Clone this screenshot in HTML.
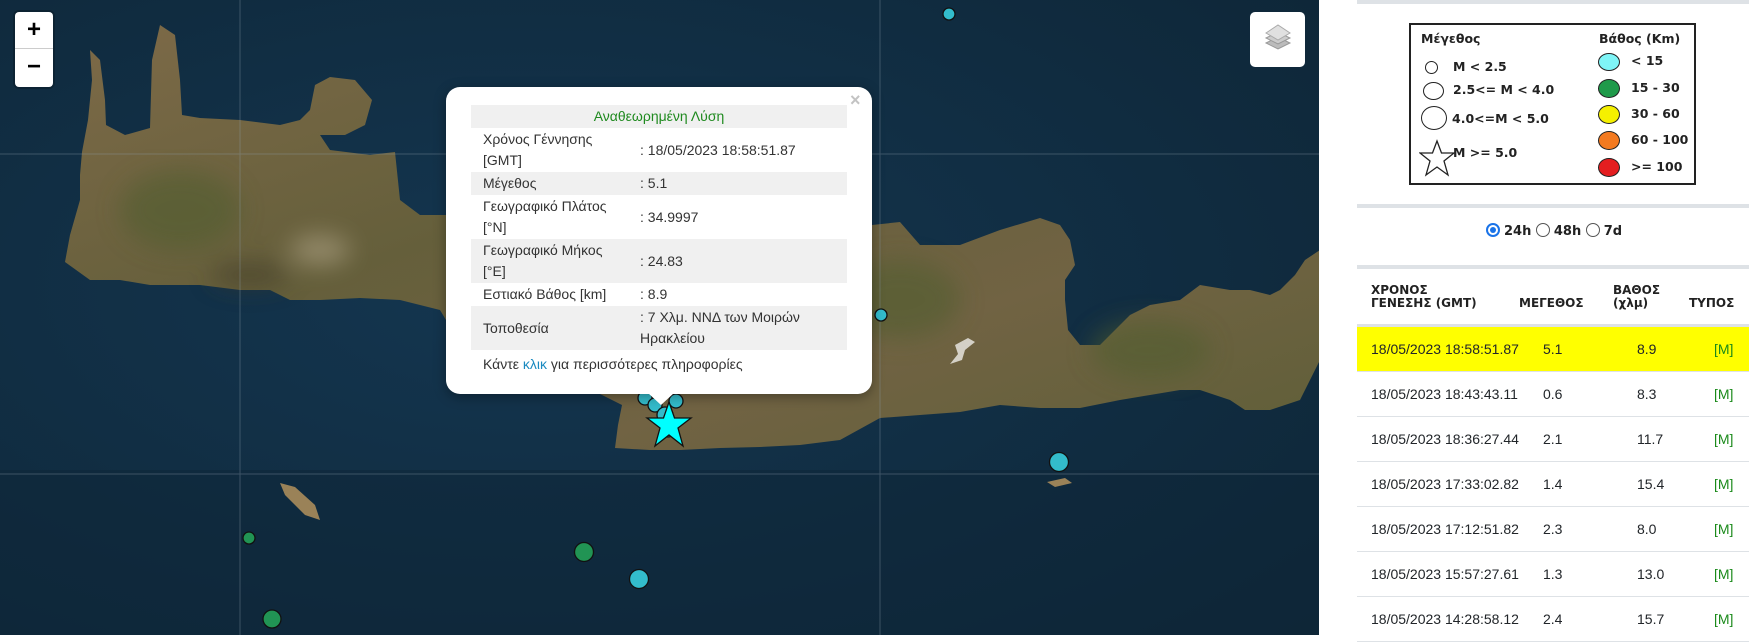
<!DOCTYPE html>
<html><head><meta charset="utf-8"><style>
*{margin:0;padding:0;box-sizing:border-box}
body{width:1749px;height:635px;overflow:hidden;background:#fff;font-family:"Liberation Sans","DejaVu Sans",sans-serif;position:relative}
#map{position:absolute;left:0;top:0;width:1319px;height:635px;overflow:hidden;background:#10293d}
.zoom{position:absolute;left:15px;top:12px;width:38px;height:75px;background:#fff;border-radius:4px;box-shadow:0 0 0 2px rgba(0,0,0,.2)}
.zoom div{height:37px;text-align:center;font:bold 24px/36px "Liberation Sans",sans-serif;color:#000}
.zoom div:first-child{border-bottom:1px solid #ccc}
.layers{position:absolute;left:1250px;top:12px;width:55px;height:55px;background:#fff;border-radius:5px}
.popup{position:absolute;left:446px;top:87px;width:426px;height:307px;background:#fff;border-radius:14px;box-shadow:0 3px 12px rgba(0,0,0,.35)}
.tip{position:absolute;left:648px;top:393px;width:0;height:0;border-left:13px solid transparent;border-right:13px solid transparent;border-top:12px solid #fff}
.close{position:absolute;left:850px;top:90px;color:#c3c3c3;font:bold 18px "Liberation Sans",sans-serif}
.ptab{position:absolute;left:471px;top:105px;width:376px;border-collapse:collapse;font-size:14px;color:#333;line-height:21px}
.ptab td{padding:1px 0 1px 12px;vertical-align:middle}
.ptab tr.g{background:#f0f0f0}
.ptab td.v{width:207px;padding-left:0}
.foot{position:absolute;left:483px;top:356px;font-size:14px;color:#333}
#side{position:absolute;left:1319px;top:0;width:430px;height:635px}
.hr{position:absolute;left:38px;width:392px;height:4px;background:#dee2e6}
.legend{position:absolute;left:90px;top:23px;width:287px;height:162px;border:2px solid #222;font-family:"DejaVu Sans",sans-serif;font-size:12.5px;font-weight:bold;color:#222}
.legend span{position:absolute;white-space:nowrap}
.c{position:absolute;border:1.5px solid #222;border-radius:50%}
.radios{position:absolute;top:223px;left:167px;font:bold 13px "DejaVu Sans",sans-serif;color:#222}
.rb{display:inline-block;width:14px;height:14px;border:1px solid #555;border-radius:50%;vertical-align:-2px;margin-right:4px;position:relative}
.rb.on{border:2px solid #1a73e8}
.rb.on:after{content:"";position:absolute;left:2px;top:2px;width:6px;height:6px;border-radius:50%;background:#1a73e8}
.th{position:absolute;font:bold 12px/13px "DejaVu Sans",sans-serif;color:#222}
.row{position:absolute;left:38px;width:392px;height:45px;border-bottom:1px solid #dee2e6;font-size:14px;color:#212529}
.row span{position:absolute;top:14px}
.row .m{color:#1a8a1a}
</style></head><body>
<div id="map">
<svg width="1319" height="635" style="position:absolute;left:0;top:0">
<defs>
<linearGradient id="land" x1="0" y1="0" x2="1" y2="1">
<stop offset="0" stop-color="#7d6a48"/><stop offset=".4" stop-color="#655f3b"/><stop offset=".7" stop-color="#716343"/><stop offset="1" stop-color="#5f5f38"/></linearGradient>
<radialGradient id="sea" cx=".4" cy=".45" r=".8"><stop offset="0" stop-color="#143650"/><stop offset="1" stop-color="#0e2637"/></radialGradient>
<filter id="bl"><feGaussianBlur stdDeviation="12"/></filter>
</defs>
<rect width="1319" height="635" fill="url(#sea)"/>
<rect x="0" y="470" width="1319" height="165" fill="#0e2638" opacity=".5"/>
<path fill="url(#land)" d="M82,152 L88,120 L92,80 L90,50 L100,60 L105,100 L106,125 L125,135 L150,128 L152,60 L160,25 L175,35 L180,80 L182,115 L200,118 L240,120 L280,125 L300,120 L310,110 L315,85 L330,77 L355,80 L372,100 L365,125 L345,135 L320,135 L330,150 L370,155 L395,152 L400,200 L420,215 L446,215 L600,220 L872,225 L900,222 L920,245 L960,245 L1000,230 L1040,218 L1060,225 L1070,240 L1075,265 L1065,280 L1065,300 L1068,330 L1080,345 L1100,345 L1115,330 L1130,315 L1150,305 L1180,300 L1200,285 L1230,290 L1250,290 L1270,295 L1280,290 L1295,275 L1305,260 L1320,250 L1320,360 L1300,400 L1270,410 L1245,410 L1230,400 L1200,390 L1180,390 L1150,395 L1120,400 L1080,408 L1040,408 L1000,405 L960,412 L920,415 L880,418 L840,440 L800,445 L760,447 L720,448 L680,450 L650,450 L615,448 L618,425 L622,405 L600,394 L446,320 L440,310 L400,300 L360,298 L320,300 L290,300 L270,290 L240,290 L200,285 L150,285 L120,280 L90,280 L65,262 L70,235 L80,200 L80,175 Z"/>
<g filter="url(#bl)" opacity=".55">
<ellipse cx="180" cy="210" rx="60" ry="40" fill="#4f5d2e"/>
<ellipse cx="900" cy="300" rx="60" ry="40" fill="#4f5d2e"/>
<ellipse cx="1150" cy="350" rx="60" ry="30" fill="#4f5d2e"/>
<ellipse cx="320" cy="250" rx="30" ry="15" fill="#b7ab8e"/>
<ellipse cx="250" cy="275" rx="40" ry="12" fill="#3d3826"/>
</g>
<path fill="#e6e4de" opacity=".85" d="M955,345 L968,338 L975,342 L965,350 L962,360 L950,364 L958,354 Z"/>
<path fill="#9a8258" d="M280,483 L295,487 L315,505 L320,520 L305,515 L285,495 Z"/>
<path fill="#9a8258" d="M1047,482 L1065,478 L1072,483 L1055,487 Z"/>
<g stroke="#8fa0ad" stroke-width="1" opacity=".35">
<line x1="240" y1="0" x2="240" y2="635"/><line x1="880" y1="0" x2="880" y2="635"/>
<line x1="0" y1="154" x2="1319" y2="154"/><line x1="0" y1="474" x2="1319" y2="474"/>
</g>
<g stroke="#111" stroke-width="1.3">
<circle cx="249" cy="538" r="6" fill="#219454"/>
<circle cx="272" cy="619" r="9" fill="#219454"/>
<circle cx="584" cy="552" r="9.5" fill="#219454"/>
<circle cx="639" cy="579" r="9.5" fill="#33bccb"/>
<circle cx="1059" cy="462" r="9.5" fill="#33bccb"/>
<circle cx="949" cy="14" r="6" fill="#33bccb"/>
<circle cx="881" cy="315" r="6" fill="#33bccb"/>
<circle cx="645" cy="398" r="7" fill="#33bccb"/>
<circle cx="655" cy="405" r="7" fill="#33bccb"/>
<circle cx="676" cy="401" r="7" fill="#33bccb"/>
<circle cx="665" cy="415" r="8" fill="#33bccb"/>
<circle cx="668" cy="430" r="7" fill="#33bccb"/>
<path d="M669,402 L674.5,418 L691,418 L678,428 L683,446 L669,435 L655,446 L660,428 L647,418 L663.5,418 Z" fill="#00ffff"/>
</g>
</svg>
<div class="zoom"><div>+</div><div>−</div></div>
<div class="layers"><svg width="55" height="55"><path d="M16,31 L28,25 L40,31 L28,37 Z" fill="#bbb" stroke="#999"/><path d="M16,26 L28,20 L40,26 L28,32 Z" fill="#ccc" stroke="#999"/><path d="M16,21 L28,13 L40,21 L28,28 Z" fill="#e0e0e0" stroke="#aaa"/></svg></div>
<div class="popup"></div>
<div class="tip"></div>
<div class="close">×</div>
<table class="ptab">
<tr class="g"><td colspan="2" style="text-align:center;color:#1f8a1f;padding:1px 0">Αναθεωρημένη Λύση</td></tr>
<tr><td>Χρόνος Γέννησης<br>[GMT]</td><td class="v">: 18/05/2023 18:58:51.87</td></tr>
<tr class="g"><td>Μέγεθος</td><td class="v">: 5.1</td></tr>
<tr><td>Γεωγραφικό Πλάτος<br>[°N]</td><td class="v">: 34.9997</td></tr>
<tr class="g"><td>Γεωγραφικό Μήκος<br>[°E]</td><td class="v">: 24.83</td></tr>
<tr><td>Εστιακό Βάθος [km]</td><td class="v">: 8.9</td></tr>
<tr class="g"><td>Τοποθεσία</td><td class="v">: 7 Χλμ. ΝΝΔ των Μοιρών<br>Ηρακλείου</td></tr>
</table>
<div class="foot">Κάντε <span style="color:#1a8ac0">κλικ</span> για περισσότερες πληροφορίες</div>
</div>
<div id="side">
<div class="hr" style="top:0"></div>
<div class="legend">
<span style="left:10px;top:6px">Μέγεθος</span>
<span style="left:188px;top:6px">Βάθος (Km)</span>
<div class="c" style="left:14px;top:36px;width:13px;height:13px"></div><span style="left:42px;top:34px">M &lt; 2.5</span>
<div class="c" style="left:12px;top:57px;width:21px;height:18px"></div><span style="left:42px;top:57px">2.5&lt;= M &lt; 4.0</span>
<div class="c" style="left:10px;top:81px;width:26px;height:24px"></div><span style="left:41px;top:86px">4.0&lt;=M &lt; 5.0</span>
<svg style="position:absolute;left:8px;top:114px" width="36" height="38"><path d="M18,2 L22.5,14 L35,14 L25,22 L29,36 L18,28 L7,36 L11,22 L1,14 L13.5,14 Z" fill="none" stroke="#222" stroke-width="1.3"/></svg>
<span style="left:42px;top:120px">M &gt;= 5.0</span>
<div class="c" style="left:187px;top:28px;width:22px;height:18px;background:#7ff5f7"></div><span style="left:220px;top:28px">&lt; 15</span>
<div class="c" style="left:187px;top:54px;width:22px;height:19px;background:#1f9a4a"></div><span style="left:220px;top:55px">15 - 30</span>
<div class="c" style="left:187px;top:80px;width:22px;height:19px;background:#f5f000"></div><span style="left:220px;top:81px">30 - 60</span>
<div class="c" style="left:187px;top:106px;width:22px;height:19px;background:#f37a20"></div><span style="left:220px;top:107px">60 - 100</span>
<div class="c" style="left:187px;top:133px;width:22px;height:19px;background:#e41e20"></div><span style="left:220px;top:134px">&gt;= 100</span>
</div>
<div class="hr" style="top:204px"></div>
<div class="radios"><span class="rb on"></span>24h <span class="rb"></span>48h <span class="rb"></span>7d</div>
<div class="hr" style="top:265px"></div>
<div class="th" style="left:52px;top:284px">ΧΡΟΝΟΣ<br>ΓΕΝΕΣΗΣ (GMT)</div>
<div class="th" style="left:200px;top:297px">ΜΕΓΕΘΟΣ</div>
<div class="th" style="left:294px;top:284px">ΒΑΘΟΣ<br>(χλμ)</div>
<div class="th" style="left:370px;top:297px">ΤΥΠΟΣ</div>
<div class="hr" style="top:324px"></div>
<div class="row" style="top:327px;background:#ffff00"><span style="left:14px">18/05/2023 18:58:51.87</span><span style="left:186px">5.1</span><span style="left:280px">8.9</span><span class="m" style="left:357px">[M]</span></div>
<div class="row" style="top:372px"><span style="left:14px">18/05/2023 18:43:43.11</span><span style="left:186px">0.6</span><span style="left:280px">8.3</span><span class="m" style="left:357px">[M]</span></div>
<div class="row" style="top:417px"><span style="left:14px">18/05/2023 18:36:27.44</span><span style="left:186px">2.1</span><span style="left:280px">11.7</span><span class="m" style="left:357px">[M]</span></div>
<div class="row" style="top:462px"><span style="left:14px">18/05/2023 17:33:02.82</span><span style="left:186px">1.4</span><span style="left:280px">15.4</span><span class="m" style="left:357px">[M]</span></div>
<div class="row" style="top:507px"><span style="left:14px">18/05/2023 17:12:51.82</span><span style="left:186px">2.3</span><span style="left:280px">8.0</span><span class="m" style="left:357px">[M]</span></div>
<div class="row" style="top:552px"><span style="left:14px">18/05/2023 15:57:27.61</span><span style="left:186px">1.3</span><span style="left:280px">13.0</span><span class="m" style="left:357px">[M]</span></div>
<div class="row" style="top:597px"><span style="left:14px">18/05/2023 14:28:58.12</span><span style="left:186px">2.4</span><span style="left:280px">15.7</span><span class="m" style="left:357px">[M]</span></div>
</div>
</body></html>
